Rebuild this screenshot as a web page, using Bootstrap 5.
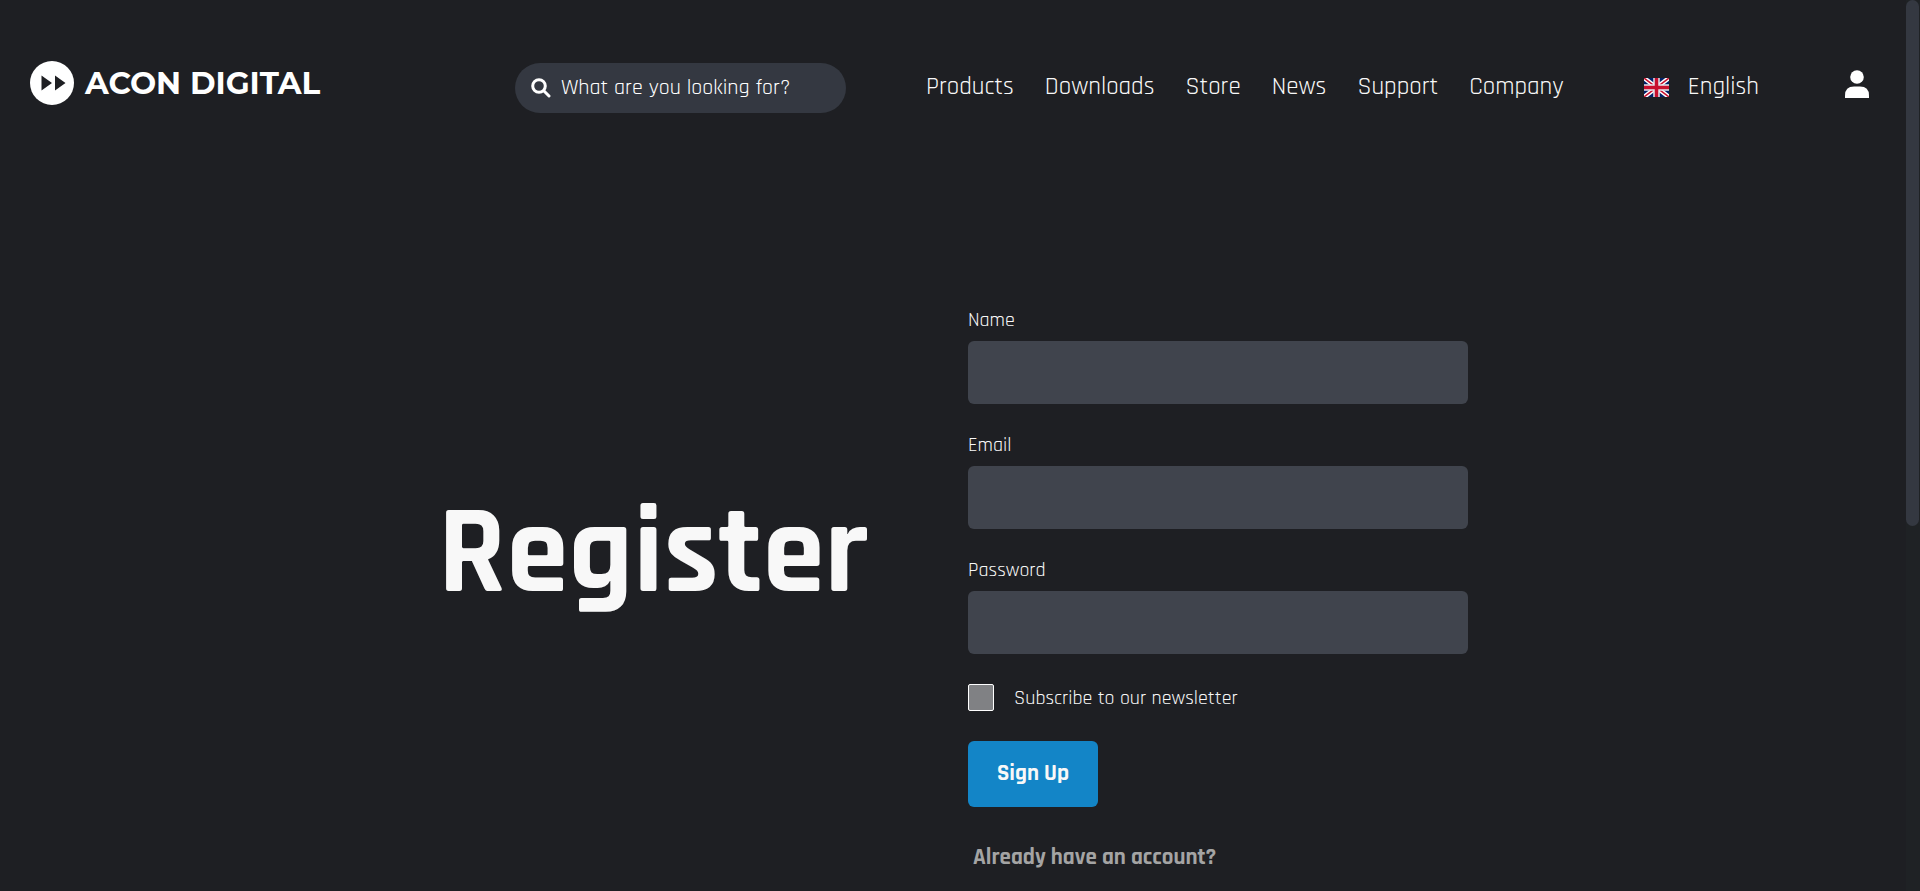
<!DOCTYPE html>
<html lang="en">
<head>
<meta charset="utf-8">
<meta name="viewport" content="width=device-width, initial-scale=1">
<title>Register - Acon Digital</title>
<link href="https://cdn.jsdelivr.net/npm/bootstrap@5.3.0/dist/css/bootstrap.min.css" rel="stylesheet">
<style>
  body { background: #1e1f23; color: #f8f8f8; font-family: Rajdhani, Roboto, "Liberation Sans", sans-serif; font-weight: 400; overflow: hidden; }
  .page-scroll { height: 100vh; min-width: 0; overflow-y: auto; scrollbar-width: none; }
  .scroll-track { width: 14px; background: #1f2225; }
  .scroll-thumb { width: 13px; height: 59%; background: #343841; border-radius: 7px; }
  .site-header { padding: 61px 36px 56px 30px; column-gap: 80px; }
  .brand { gap: 11px; color: #fff; font: 700 31px/44px Montserrat, Lato, sans-serif; }
  .search { width: 331px; height: 50px; margin-top: 2px; padding: 0 16px; gap: 10px; background: #343841; border-radius: 25px; }
  .search input { min-width: 0; color: #fff; font-size: 22px; font-weight: 400; outline: 0; }
  .search input::placeholder { color: #fff; opacity: 1; }
  .main-nav { column-gap: 31px; }
  .main-nav, .lang, .account { margin-top: 9px; }
  .main-nav a, .lang { color: #f8f8f8; font-size: 25px; line-height: 34px; text-decoration: none; white-space: nowrap; }
  .lang { gap: 19px; margin-right: 5px; }
  .register { padding: 139px 24px 640px; column-gap: 100px; }
  .register h1 { width: 430px; margin: 0; padding-bottom: 74px; font-size: 125px; font-weight: 700; line-height: 150px; }
  .register form { width: 500px; }
  .register label { font-size: 20px; line-height: 24px; }
  .field { margin-bottom: 29px; }
  .field label { display: block; margin-bottom: 9px; }
  .field .form-control { height: 63px; background: #40444d; border: 0; border-radius: 6px; color: #fff; }
  .opt { gap: 20px; margin-bottom: 30px; padding-top: 1px; }
  .opt .form-check-input { width: 26px; height: 27px; margin: 0; background-color: #808184; border: 1px solid #fff; border-radius: 2px; }
  .btn-signup { height: 66px; width: 130px; padding: 0; background: #1385c7; color: #f8f8f8; border: 0; border-radius: 6px; font-size: 23px; font-weight: 700; }
  .login-link { display: inline-block; margin: 33px 5px 0; color: #a4a4a4; font-size: 23px; font-weight: 700; line-height: 36px; text-decoration: none; }
</style>
</head>
<body>
<div class="d-flex vh-100">
<div class="page-scroll flex-grow-1">
  <header class="site-header d-flex flex-wrap align-items-start">
    <a href="#" class="brand d-flex align-items-center text-decoration-none me-auto">
      <svg width="44" height="44" viewBox="0 0 44 44" aria-hidden="true"><circle cx="22" cy="22" r="22" fill="#fff"/><path d="M11.500 14.500v15L22 22zM25 14.500v15L35.500 22z" fill="#1e1f23"/></svg>
      <span>ACON DIGITAL</span>
    </a>
    <div class="search d-flex align-items-center">
      <svg class="flex-shrink-0" width="20" height="20" viewBox="0 0 20 20" fill="none" stroke="#fff" stroke-width="3" stroke-linecap="round" aria-hidden="true"><circle cx="8" cy="8" r="6.300"/><path d="M13 13l5 5"/></svg>
      <input type="search" class="border-0 bg-transparent p-0 w-100" placeholder="What are you looking for?" aria-label="Search">
    </div>
    <nav class="main-nav d-flex flex-wrap">
      <a href="#">Products</a><a href="#">Downloads</a><a href="#">Store</a><a href="#">News</a><a href="#">Support</a><a href="#">Company</a>
    </nav>
    <a href="#" class="lang d-flex align-items-center">
      <svg width="25" height="19" viewBox="0 0 25 19" aria-hidden="true"><path fill="#012169" d="M0 0h25v19H0z"/><path d="M0 0l25 19M25 0L0 19" stroke="#fff" stroke-width="4.500"/><path d="M0 0l25 19M25 0L0 19" stroke="#c8102e" stroke-width="1.500"/><path d="M12.500 0v19M0 9.500h25" stroke="#e4e5ec" stroke-width="6.500"/><path d="M12.500 0v19M0 9.500h25" stroke="#c8102e" stroke-width="3.500"/></svg>
      English
    </a>
    <a href="#" aria-label="Account" class="account d-flex"><svg width="26" height="28" viewBox="0 0 26 28" fill="#fff" aria-hidden="true"><circle cx="13" cy="7" r="6.800"/><path d="M1 28v-2.500Q1 16.500 10 16.500h6q9 0 9 9V28z"/></svg></a>
  </header>
  <main class="register d-flex flex-wrap justify-content-center">
    <h1 class="align-self-center">Register</h1>
    <form>
      <div class="field"><label for="name">Name</label><input id="name" type="text" class="form-control"></div>
      <div class="field"><label for="email">Email</label><input id="email" type="email" class="form-control"></div>
      <div class="field"><label for="password">Password</label><input id="password" type="password" class="form-control"></div>
      <div class="opt d-flex align-items-center"><input id="news" type="checkbox" class="form-check-input"><label for="news">Subscribe to our newsletter</label></div>
      <button type="button" class="btn btn-signup d-block">Sign Up</button>
      <a href="#" class="login-link">Already have an account?</a>
    </form>
  </main>
</div>
<div class="scroll-track flex-shrink-0" aria-hidden="true"><div class="scroll-thumb"></div></div>
</div>
<script src="https://cdn.jsdelivr.net/npm/bootstrap@5.3.0/dist/js/bootstrap.bundle.min.js"></script>
</body>
</html>
